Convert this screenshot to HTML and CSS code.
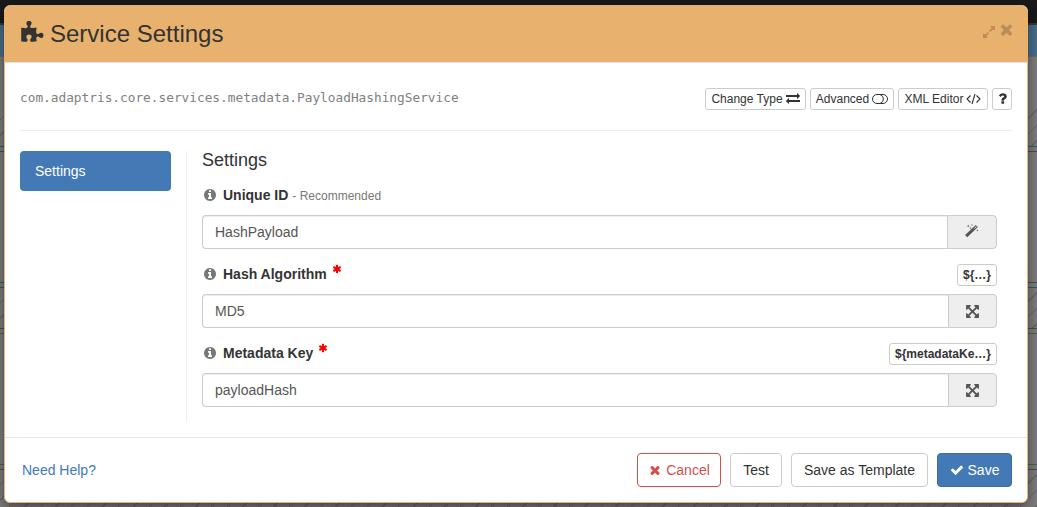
FILE: index.html
```html
<!DOCTYPE html>
<html lang="en">
<head>
<meta charset="utf-8">
<title>Service Settings</title>
<link rel="stylesheet" href="styles.css">
</head>
<body>
<svg class="sprite" width="0" height="0" aria-hidden="true">
  <symbol id="puzzle" viewBox="0 0 1792 1792"><path d="M1755 1083q0 81-44.5 135t-123.5 54q-41 0-77.5-17.5t-59-38-56.5-38-71-17.5q-110 0-110 124 0 39 16 115t15 115v5q-22 0-33 1-34 3-97.5 11.5t-115.5 13.5-98 5q-61 0-103-26.5t-42-83.5q0-37 17.5-71t38-56.5 38-59 17.5-77.5q0-79-54-123.5t-135-44.5q-84 0-143 45.5t-59 127.5q0 43 15 83t33.5 64.5 33.5 53 15 50.5q0 45-46 89-37 35-117 35-95 0-245-24-9-2-27.5-4t-27.5-4l-13-2q-1 0-3-1-2 0-2-1v-1024q2 1 17.5 3.5t34 5 21.5 3.5q150 24 245 24 80 0 117-35 46-44 46-89 0-22-15-50.5t-33.5-53-33.5-64.5-15-83q0-82 59-127.5t144-45.5q80 0 134 44.5t54 123.5q0 41-17.5 77.5t-38 59-38 56.5-17.5 71q0 57 42 83.5t103 26.5q64 0 180-15t163-17v2q-1 2-3.5 17.5t-5 34-3.5 21.5q-24 150-24 245 0 80 35 117 44 46 89 46 22 0 50.5-15t53-33.5 64.5-33.5 83-15q82 0 127.5 59t45.5 143z"/></symbol>
  <symbol id="expand" viewBox="0 0 1792 1792"><path d="M883 1056q0 13-10 23l-332 332 144 144q19 19 19 45t-19 45-45 19h-448q-26 0-45-19t-19-45v-448q0-26 19-45t45-19 45 19l144 144 332-332q10-10 23-10t23 10l114 114q10 10 10 23zm781-864v448q0 26-19 45t-45 19-45-19l-144-144-332 332q-10 10-23 10t-23-10l-114-114q-10-10-10-23t10-23l332-332-144-144q-19-19-19-45t19-45 45-19h448q26 0 45 19t19 45z"/></symbol>
  <symbol id="times" viewBox="0 0 1792 1792"><path d="M1490 1322q0 40-28 68l-136 136q-28 28-68 28t-68-28l-294-294-294 294q-28 28-68 28t-68-28l-136-136q-28-28-28-68t28-68l294-294-294-294q-28-28-28-68t28-68l136-136q28-28 68-28t68 28l294 294 294-294q28-28 68-28t68 28l136 136q28 28 28 68t-28 68l-294 294 294 294q28 28 28 68z"/></symbol>
  <symbol id="exchange" viewBox="0 0 1792 1792"><path d="M1792 1184v192q0 13-9.500 22.500t-22.500 9.500h-1376v192q0 13-9.500 22.500t-22.500 9.500q-12 0-24-10l-319-320q-9-9-9-22 0-14 9-23l320-320q9-9 23-9 13 0 22.500 9.500t9.500 22.500v192h1376q13 0 22.500 9.500t9.500 22.500zm0-544q0 14-9 23l-320 320q-9 9-23 9-13 0-22.500-9.500t-9.500-22.500v-192h-1376q-13 0-22.500-9.500t-9.500-22.500v-192q0-13 9.500-22.500t22.500-9.500h1376v-192q0-14 9-23t23-9q12 0 24 10l319 319q9 9 9 23z"/></symbol>
  <symbol id="toggle" viewBox="0 0 16 12"><rect x=".5" y="1.500" width="15" height="9" rx="4.500" fill="none" stroke="currentColor"/><path d="M8.200 1.700a4.500 4.500 0 0 1 0 8.600" fill="none" stroke="currentColor"/></symbol>
  <symbol id="code" viewBox="0 0 15 12"><path d="M4.500 2.500 1 6l3.500 3.500M10.500 2.500 14 6l-3.500 3.500M9 1 6 11" fill="none" stroke="currentColor" stroke-width="1.100"/></symbol>
  <symbol id="question" viewBox="0 0 1792 1792"><path d="M1088 1256v240q0 16-12 28t-28 12h-240q-16 0-28-12t-12-28v-240q0-16 12-28t28-12h240q16 0 28 12t12 28zm316-600q0 54-15.500 101t-35 76.500-55 59.500-57.500 43.500-61 35.500q-41 23-68.500 65t-27.500 67q0 17-12 32.500t-28 15.500h-240q-15 0-25.500-18.500t-10.500-37.500v-45q0-83 65-156.500t143-108.500q59-27 84-56t25-76q0-42-46.500-74t-107.500-32q-65 0-108 29-35 25-107 115-13 16-31 16-12 0-25-8l-164-125q-13-10-15.500-25t5.500-28q160-266 464-266 80 0 161 31t146 83 106 127.500 41 158.500z"/></symbol>
  <symbol id="info" viewBox="0 0 1792 1792"><path d="M1152 1376v-160q0-14-9-23t-23-9h-96v-512q0-14-9-23t-23-9h-320q-14 0-23 9t-9 23v160q0 14 9 23t23 9h96v320h-96q-14 0-23 9t-9 23v160q0 14 9 23t23 9h448q14 0 23-9t9-23zm-128-896v-160q0-14-9-23t-23-9h-192q-14 0-23 9t-9 23v160q0 14 9 23t23 9h192q14 0 23-9t9-23zm640 416q0 209-103 385.500t-279.500 279.500-385.500 103-385.500-103-279.500-279.500-103-385.500 103-385.500 279.500-279.500 385.500-103 385.500 103 279.500 279.500 103 385.500z"/></symbol>
  <symbol id="asterisk" viewBox="0 0 1792 1792"><path d="M1546 1050q46 26 59.500 77.500t-12.500 97.500l-64 110q-26 46-77.500 59.500t-97.500-12.500l-266-153v307q0 52-38 90t-90 38h-128q-52 0-90-38t-38-90v-307l-266 153q-46 26-97.500 12.500t-77.500-59.500l-64-110q-26-46-12.500-97.500t59.500-77.500l266-154-266-154q-46-26-59.500-77.500t12.500-97.500l64-110q26-46 77.500-59.500t97.500 12.500l266 153v-307q0-52 38-90t90-38h128q52 0 90 38t38 90v307l266-153q46-26 97.500-12.500t77.500 59.500l64 110q26 46 12.500 97.500t-59.500 77.500l-266 154z"/></symbol>
  <symbol id="arrows" viewBox="0 0 1792 1792"><path d="M1411 541l-355 355 355 355 144-144q29-31 70-14 39 17 39 59v448q0 26-19 45t-45 19h-448q-42 0-59-40-17-39 14-69l144-144-355-355-355 355 144 144q31 30 14 69-17 40-59 40h-448q-26 0-45-19t-19-45v-448q0-42 40-59 39-17 69 14l144 144 355-355-355-355-144 144q-19 19-45 19-12 0-24-5-40-17-40-59v-448q0-26 19-45t45-19h448q42 0 59 40 17 39-14 69l-144 144 355 355 355-355-144-144q-31-30-14-69 17-40 59-40h448q26 0 45 19t19 45v448q0 42-39 59-13 5-25 5-26 0-45-19z"/></symbol>
  <symbol id="magic" viewBox="0 0 14 14"><path d="M1.200 12.200 11.800 2" fill="none" stroke="currentColor" stroke-width="3.100"/><path d="M9.300 4.400l2.200-2.100" fill="none" stroke="#eee" stroke-width="1"/><path d="M3.200.6l.4 1.100 1.100.4-1.100.4-.4 1.100-.4-1.100-1.100-.4 1.100-.4zM7 0l.3.700.7.300-.7.300-.3.700-.3-.7-.7-.3.700-.3zM12.400 5.300l.3.800.8.300-.8.300-.3.800-.3-.8-.8-.3.800-.3zM5.600 3l.3.800.8.300-.8.300-.3.800-.3-.8-.8-.3.800-.3z"/></symbol>
  <symbol id="check" viewBox="0 0 1792 1792"><path d="M1671 566q0 40-28 68l-724 724-136 136q-28 28-68 28t-68-28l-136-136-362-362q-28-28-28-68t28-68l136-136q28-28 68-28t68 28l294 295 656-657q28-28 68-28t68 28l136 136q28 28 28 68z"/></symbol>
</svg>

<div class="backdrop" aria-hidden="true">
  <div class="navbar"></div>
  <div class="toolbar"></div>
  <div class="canvas">
    <div class="hatch first"></div>
    <div class="lane"></div>
    <div class="hatch middle"></div>
    <div class="lane green"></div>
    <div class="hatch last"></div>
  </div>
</div>

<main class="modal">
  <header class="modal-header">
    <svg class="icon title-icon"><use href="#puzzle"/></svg>
    <h1 class="title">Service Settings</h1>
    <div class="window-tools">
      <svg class="icon"><use href="#expand"/></svg>
      <svg class="icon close"><use href="#times"/></svg>
    </div>
  </header>

  <section class="modal-body">
    <div class="class-row">
      <code class="class-name">com.adaptris.core.services.metadata.PayloadHashingService</code>
      <div class="tools">
        <button class="btn-xs change">Change Type <svg class="icon"><use href="#exchange"/></svg></button>
        <button class="btn-xs advanced">Advanced <svg class="icon"><use href="#toggle"/></svg></button>
        <button class="btn-xs xml">XML Editor <svg class="icon"><use href="#code"/></svg></button>
        <button class="btn-xs help"><svg class="icon"><use href="#question"/></svg></button>
      </div>
    </div>

    <div class="columns">
      <nav class="sidebar"><a class="tab">Settings</a></nav>
      <div class="settings">
        <h2 class="subtitle">Settings</h2>

        <div class="field">
          <div class="label-row">
            <svg class="icon info"><use href="#info"/></svg>
            <label class="label">Unique ID</label>
            <span class="hint">- Recommended</span>
          </div>
          <div class="input-group">
            <div class="input">HashPayload</div>
            <div class="addon wide"><svg class="icon"><use href="#magic"/></svg></div>
          </div>
        </div>

        <div class="field">
          <div class="label-row">
            <svg class="icon info"><use href="#info"/></svg>
            <label class="label">Hash Algorithm</label>
            <svg class="icon required"><use href="#asterisk"/></svg>
            <button class="btn-xs variable short">${…}</button>
          </div>
          <div class="input-group">
            <div class="input">MD5</div>
            <div class="addon"><svg class="icon"><use href="#arrows"/></svg></div>
          </div>
        </div>

        <div class="field">
          <div class="label-row">
            <svg class="icon info"><use href="#info"/></svg>
            <label class="label">Metadata Key</label>
            <svg class="icon required"><use href="#asterisk"/></svg>
            <button class="btn-xs variable long">${metadataKe…}</button>
          </div>
          <div class="input-group">
            <div class="input">payloadHash</div>
            <div class="addon"><svg class="icon"><use href="#arrows"/></svg></div>
          </div>
        </div>
      </div>
    </div>
  </section>

  <footer class="modal-footer">
    <a class="help-link">Need Help?</a>
    <button class="btn cancel"><svg class="icon"><use href="#times"/></svg>Cancel</button>
    <button class="btn test">Test</button>
    <button class="btn template">Save as Template</button>
    <button class="btn save"><svg class="icon"><use href="#check"/></svg>Save</button>
  </footer>
</main>
</body>
</html>
```
FILE: styles.css
```css
* { box-sizing: border-box; }

body {
  margin: 0;
  height: 507px;
  padding: 5px 9px 4px 4px;
  overflow: hidden;
  font: 14px/20px "Liberation Sans", Arial, sans-serif;
  color: #333;
  background: #7a7a7a;
}

.sprite { position: absolute; }
.icon { width: 14px; height: 14px; fill: currentColor; flex: none; }

/* Dimmed application behind the dialog */
.backdrop {
  position: absolute;
  inset: 0;
  display: flex;
  flex-direction: column;
}
.navbar { height: 25px; background: #191919; border-bottom: 2px solid #383838; }
.toolbar { height: 32px; background: #4a7090; border-bottom: 1px solid #756a60; }
.canvas { flex: 1; display: flex; flex-direction: column; background: #808080; }
.hatch {
  border-top: 1px solid #21686f;
  background: repeating-linear-gradient(135deg, transparent 0 10px, #6a6a6a 10px 11px);
}
.hatch.first { height: 42px; margin-top: 48px; border-top: 0; border-bottom: 1px solid #21686f; }
.hatch.middle { height: 42px; margin-top: 4px; border-bottom: 1px solid #50504a; }
.hatch.last { flex: 1; margin-top: 4px; border-top-color: #505050; }
.lane { height: 132px; margin-top: 4px; border-top: 1px solid #505050; border-bottom: 1px solid #505048; }
.lane.green { border-color: #3e7038; }

.modal {
  position: relative;
  height: 498px;
  display: flex;
  flex-direction: column;
  border: 1px solid #e8b16c;
  border-radius: 6px;
  background: #fff;
  box-shadow: 0 5px 15px rgba(0, 0, 0, .5);
}

.modal-header {
  height: 57px;
  flex: none;
  display: flex;
  align-items: center;
  padding: 0 15px;
  border-bottom: 1px solid #e5e5e5;
  border-radius: 5px 5px 0 0;
  background: #e8b16e;
}
.title-icon { width: 24px; height: 24px; margin-top: -2px; }
.title { margin: 0 auto 0 6px; font-size: 24px; line-height: 28px; font-weight: 400; }
.window-tools { display: flex; gap: 3px; color: #b98d58; margin-top: -8px; }
.window-tools .icon { margin-top: 3px; }
.window-tools .close { width: 17px; height: 17px; margin: -1px -3px 0 -1px; }

.modal-body { height: 374px; flex: none; padding: 15px 15px 0; }
.class-row {
  height: 53px;
  display: flex;
  align-items: flex-start;
  padding-top: 10px;
  border-bottom: 1px solid #eee;
}
.class-name {
  margin-right: auto;
  font: 12.790px/20px "DejaVu Sans Mono", monospace;
  color: #808080;
}
.tools { display: flex; gap: 4px; }
.btn-xs {
  height: 22px;
  display: flex;
  align-items: center;
  justify-content: center;
  gap: 3px;
  padding: 0;
  border: 1px solid #ccc;
  border-radius: 3px;
  background: #fff;
  color: #333;
  font: 12px/18px "Liberation Sans", Arial, sans-serif;
  white-space: nowrap;
}
.change { width: 101px; }
.change .icon { margin-top: -2px; }
.advanced { width: 84px; }
.advanced .icon { width: 16px; height: 12px; margin-top: -1px; }
.xml { width: 90px; }
.xml .icon { width: 15px; height: 12px; margin-top: -1px; }
.help { width: 20px; }
.help .icon { width: 15px; height: 15px; margin-top: -2px; }

.columns { display: flex; gap: 15px; margin-top: 20px; }
.sidebar { width: 151px; }
.tab {
  display: block;
  height: 40px;
  padding: 10px 15px;
  border-radius: 4px;
  background: #437ab5;
  color: #fff;
}
.settings { flex: 1; height: 271px; padding: 0 15px; border-left: 1px solid #eee; }
.subtitle { margin: -1px 0 14px; font-size: 18px; line-height: 20px; font-weight: 400; }
.field { margin-bottom: 14px; }
.label-row { display: flex; align-items: center; height: 22px; margin-bottom: 9px; }
.info { color: #777; margin: 0 6px 0 1px; }
.label { font-weight: 700; }
.hint { margin-left: 4px; font-size: 12px; color: #777; padding-top: 1px; }
.required { width: 10px; height: 10px; margin: -10px 0 0 5px; color: #f00; }
.variable { margin: 2px 0 0 auto; font-weight: 700; }
.short { width: 40px; }
.long { width: 108px; }
.input-group { display: flex; height: 34px; }
.input {
  flex: 1;
  padding: 6px 12px;
  border: 1px solid #ccc;
  border-right: 0;
  border-radius: 4px 0 0 4px;
  color: #555;
  box-shadow: inset 0 1px 1px rgba(0, 0, 0, .075);
}
.addon {
  width: 49px;
  display: flex;
  align-items: center;
  justify-content: center;
  border: 1px solid #ccc;
  border-radius: 0 4px 4px 0;
  background: #eee;
  color: #555;
}
.addon .icon { width: 15px; height: 15px; }
.addon.wide { width: 50px; }
.addon.wide .icon { width: 14px; height: 14px; margin-top: -2px; }

.modal-footer {
  flex: 1;
  display: flex;
  align-items: flex-start;
  gap: 9px;
  padding: 15px;
  border-top: 1px solid #e5e5e5;
}
.help-link { margin: 7px auto 0 2px; color: #437ab5; }
.btn {
  height: 34px;
  display: flex;
  align-items: center;
  justify-content: center;
  gap: 4px;
  padding: 0;
  border: 1px solid #ccc;
  border-radius: 4px;
  background: #fff;
  color: #333;
  font: 14px/20px "Liberation Sans", Arial, sans-serif;
}
.cancel { width: 84px; border-color: #d2504c; color: #d2504c; }
.test { width: 52px; }
.template { width: 137px; }
.save { width: 75px; border-color: #3a6da3; background: #437ab5; color: #fff; }
```
